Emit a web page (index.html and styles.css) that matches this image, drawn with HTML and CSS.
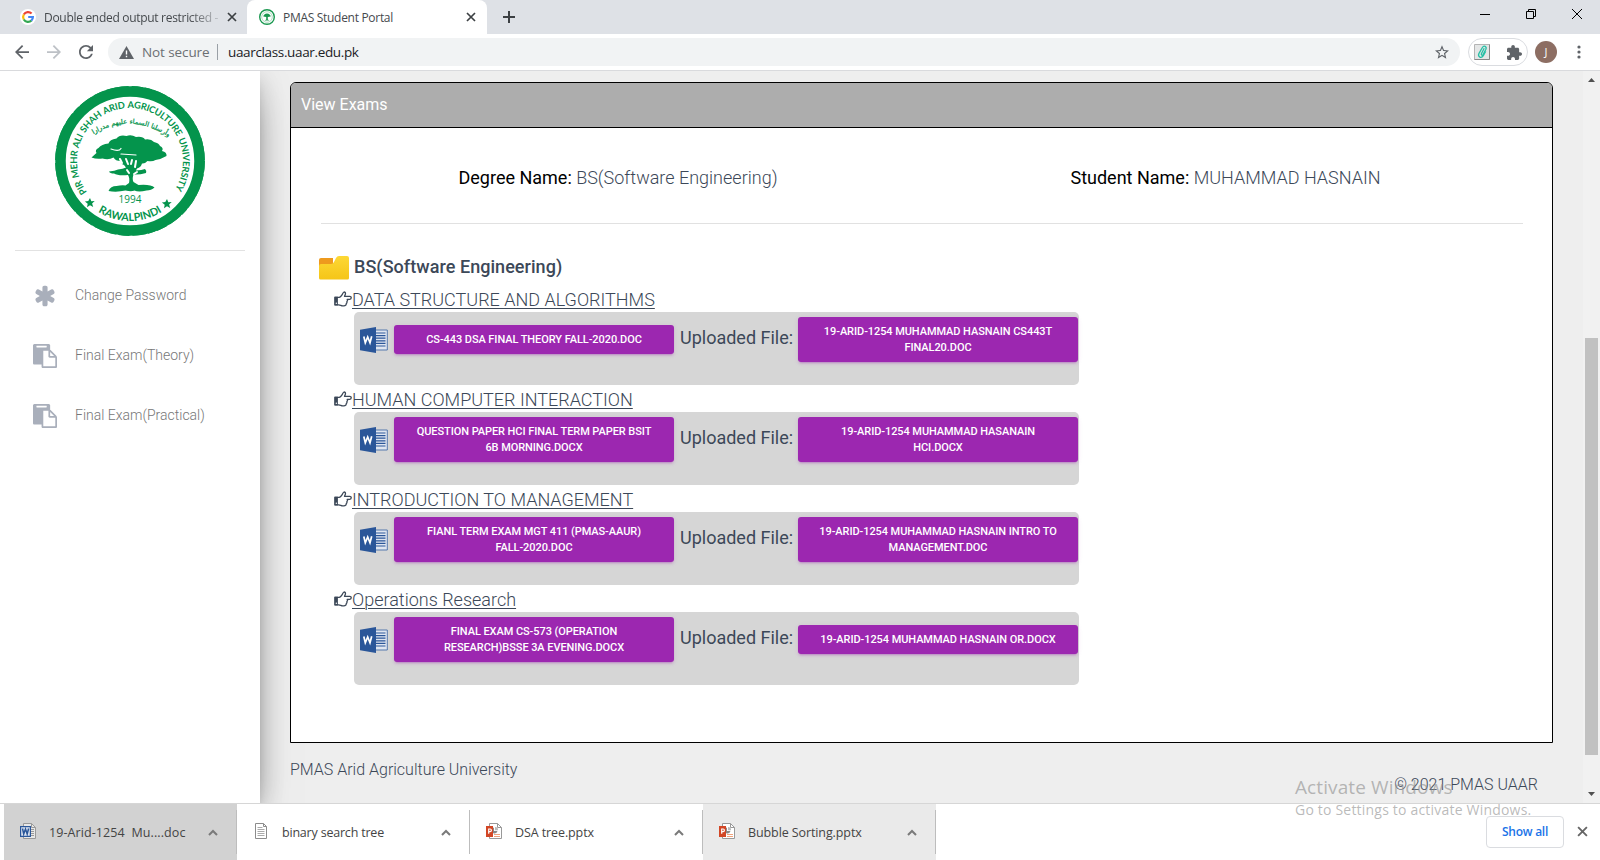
FILE: index.html
```html
<!DOCTYPE html>
<html lang="en">
<head>
<meta charset="utf-8">
<title>PMAS Student Portal</title>
<link rel="stylesheet" href="styles.css">
</head>
<body>
<svg class="defs" width="0" height="0">
  <symbol id="x" viewBox="0 0 10 10"><path d="M1 1l8 8M9 1l-8 8" fill="none" stroke="currentColor" stroke-width="1.7"/></symbol>
  <symbol id="paste" viewBox="0 0 1792 1792"><path d="M768 1664h896v-640h-416q-40 0-68-28t-28-68v-416h-384v1152zm256-1440v-64q0-13-9.500-22.500t-22.500-9.500h-704q-13 0-22.500 9.500t-9.500 22.500v64q0 13 9.500 22.500t22.500 9.500h704q13 0 22.500-9.500t9.500-22.500zm256 672h299l-299-299v299zm512 128v672q0 40-28 68t-68 28h-960q-40 0-68-28t-28-68v-160h-544q-40 0-68-28t-28-68v-1344q0-40 28-68t68-28h1088q40 0 68 28t28 68v328q21 13 36 28l408 408q28 28 48 76t20 88z" fill="currentColor"/></symbol>
  <symbol id="hand" viewBox="0 0 18 16">
    <path d="M1 6.300h4.300c1.300-.3 2-1.400 2.800-2.600C8.700 2.800 9 1.300 10 1c1.300 0 1.700 1 1.400 2.200-.2.900-.8 1.500-.9 2.200h5.300a1.400 1.400 0 0 1 0 2.900h-2.600c.6.900.4 1.700-.3 2.300.3.900 0 1.600-.7 2.100.1 1.500-.9 2.100-2.300 2.100H8.600c-1.300 0-2.300-.9-3.800-1H1z" fill="none" stroke="currentColor" stroke-width="1.300" stroke-linejoin="round"/>
    <path d="M.4 5.700h3.500v8.700H.4z" fill="currentColor"/><circle cx="2.300" cy="12.300" r=".7" fill="#fff"/>
  </symbol>
  <symbol id="word" viewBox="0 0 28 26">
    <path d="M15 3h12.300v20H15z" fill="#e0e6f0" stroke="#5578ad" stroke-width="1"/>
    <path d="M16 6h9.500M16 8.600h9.500M16 11.200h9.500M16 13.800h9.500M16 16.400h9.500M16 19h9.500" stroke="#2a5699" stroke-width="1.200"/>
    <path d="M0 2.800L16 0v26L0 23.200z" fill="#2a5699"/>
    <path d="M3.800 9.500l1.500 6.300L7.700 10l2.300 5.800L11.700 9.300" fill="none" stroke="#fff" stroke-width="1.700"/>
  </symbol>
  <symbol id="chev" viewBox="0 0 10 7"><path d="M1 6l4-4 4 4" fill="none" stroke="#7a7a7a" stroke-width="2"/></symbol>
  <symbol id="ppt" viewBox="0 0 16 16">
    <path d="M3.500.5h8l4 4v11h-12z" fill="#fff" stroke="#999"/><path d="M11.500.5v4h4" fill="none" stroke="#999"/>
    <path d="M8 4.500a3 3 0 1 0 3.500 3.500H8z" fill="#888"/><path d="M9 4v3.200h3A3 3 0 0 0 9 4z" fill="#bbb"/>
    <path d="M8 11.500h6M8 13.500h6" stroke="#f0a27c"/><path d="M0 3h7v11H0z" fill="#d24625"/>
    <path d="M2.700 10.800V6h1.400a1.200 1.200 0 0 1 0 2.600H2.700" fill="none" stroke="#fff" stroke-width="1.200"/>
  </symbol>
</svg>

<div class="tabstrip">
  <div class="tab tab-idle">
    <svg class="fav" viewBox="0 0 16 16"><circle cx="8" cy="8" r="8" fill="#fff"/><g fill="none" stroke-width="2.200"><path d="M3.800 5.500A4.900 4.900 0 0 1 11.600 4.600" stroke="#ea4335"/><path d="M3.800 5.500a5 5 0 0 0 0 5" stroke="#fbbc05"/><path d="M3.800 10.500a4.900 4.900 0 0 0 7.700 1" stroke="#34a853"/><path d="M8.200 8h4.700a4.900 4.900 0 0 1-1.600 3.600" stroke="#4285f4"/></g></svg>
    <span class="tab-title t1">Double ended output restricted -</span>
    <svg class="tab-x"><use href="#x"/></svg>
  </div>
  <div class="tab tab-active">
    <svg class="fav" viewBox="0 0 16 16"><circle cx="8" cy="8" r="7.300" fill="#fff" stroke="#1a9850" stroke-width="1.400"/><circle cx="8" cy="8" r="5.300" fill="none" stroke="#9fd3b4" stroke-width=".8"/><path d="M4.300 7.500q.5-2.700 3.700-3 3.300.3 3.700 3L8.800 8v2.600l1.700.8h-5l1.700-.8V8z" fill="#1a9850"/></svg>
    <span class="tab-title t2">PMAS Student Portal</span>
    <svg class="tab-x"><use href="#x"/></svg>
  </div>
  <svg class="newtab" viewBox="0 0 12 12"><path d="M6 0v12M0 6h12" stroke="#3c4043" stroke-width="2"/></svg>
  <svg class="winbtns" viewBox="0 0 104 12" fill="none" stroke="#000"><path d="M0 6.500h10"/><path d="M46.500 3.500h7v7h-7zM48.500 3.500v-2h7v7h-2"/><path d="M92 1l10 10M102 1L92 11"/></svg>
</div>

<div class="toolbar">
  <svg class="nav" viewBox="4 4 16 16"><path d="M20 11H7.830l5.590-5.590L12 4l-8 8 8 8 1.410-1.410L7.830 13H20v-2z" fill="#5f6368"/></svg>
  <svg class="nav" viewBox="4 4 16 16"><path d="M12 4l-1.410 1.410L16.170 11H4v2h12.170l-5.580 5.590L12 20l8-8z" fill="#bdc1c6"/></svg>
  <svg class="nav" viewBox="4 4 16 16"><path d="M17.650 6.350C16.200 4.900 14.210 4 12 4c-4.420 0-7.990 3.580-7.990 8s3.570 8 7.990 8c3.730 0 6.840-2.550 7.730-6h-2.080c-.82 2.330-3.040 4-5.650 4-3.310 0-6-2.690-6-6s2.690-6 6-6c1.660 0 3.140.69 4.220 1.780L13 11h7V4l-2.350 2.350z" fill="#5f6368"/></svg>
  <div class="omnibox">
    <svg class="warn" viewBox="0 0 15 13"><path d="M7.500 0L15 13H0z" fill="#5f6368"/><path d="M7.500 4.500v4M7.500 9.700v1.500" stroke="#fff" stroke-width="1.400"/></svg>
    <span class="insecure">Not secure</span><span class="sep"></span><span class="url">uaarclass.uaar.edu.pk</span>
    <svg class="star" viewBox="2 2 20 19"><path d="M22 9.240l-7.190-.62L12 2 9.190 8.630 2 9.240l5.460 4.730L5.820 21 12 17.270 18.180 21l-1.630-7.030L22 9.240zM12 15.400l-3.760 2.270 1-4.280-3.320-2.880 4.380-.38L12 6.100l1.710 4.040 4.380.38-3.320 2.880 1 4.280L12 15.400z" fill="#5f6368"/></svg>
  </div>
  <div class="extpill">
    <svg width="16" height="16" viewBox="0 0 16 16"><path d="M.5.500h15v15H.5z" fill="#e4e6e6" stroke="#b4b4b4"/><path d="M15.500.5v15H.5" fill="none" stroke="#888"/><path d="M10.200 4.200L7.400 9.800c-.5 1.400 1 2 1.700.8l2.800-5.400c1.100-2.600-2-4.200-3.500-1.700L5 9.300c-1.700 3.700 2.400 5.600 4.300 2.300l2.500-4.500" fill="none" stroke="#26bfa5" stroke-width="1.300"/></svg>
    <svg width="15" height="15" viewBox="2 1 21 21"><path d="M20.500 11H19V7c0-1.100-.9-2-2-2h-4V3.500C13 2.120 11.880 1 10.500 1S8 2.120 8 3.500V5H4c-1.100 0-1.990.9-1.990 2v3.800H3.500c1.490 0 2.700 1.210 2.700 2.700s-1.210 2.700-2.700 2.700H2V20c0 1.100.9 2 2 2h3.800v-1.500c0-1.490 1.210-2.700 2.700-2.700 1.490 0 2.700 1.210 2.700 2.700V22H17c1.100 0 2-.9 2-2v-4h1.500c1.380 0 2.500-1.120 2.500-2.500S21.880 11 20.500 11z" fill="#5f6368"/></svg>
  </div>
  <div class="avatar">J</div>
  <svg class="dots" viewBox="0 0 4 14" fill="#5f6368"><circle cx="2" cy="2" r="1.600"/><circle cx="2" cy="7" r="1.600"/><circle cx="2" cy="12" r="1.600"/></svg>
</div>

<div class="page">
  <aside class="sidebar">
    <div class="brand">
      <svg width="152" height="152" viewBox="-76 -76 152 152">
        <defs>
          <path id="arcTop" d="M-42.900 31.200A53 53 0 1 1 42.900 31.200"/>
          <path id="arcBottom" d="M-38 46.500A60 60 0 0 0 38 46.500"/>
          <path id="arcVerse" d="M-41 -24Q0 -52 43 -21"/>
        </defs>
        <circle r="69.500" fill="none" stroke="#04944c" stroke-width="10.500"/>
        <circle r="73.300" fill="none" stroke="#04944c" stroke-width="3.200" stroke-dasharray="11 2 7 1.500 14 3"/>
        <text class="seal-top"><textPath href="#arcTop" textLength="229" lengthAdjust="spacing">PIR MEHR ALI SHAH ARID AGRICULTURE UNIVERSITY</textPath></text>
        <text class="seal-bottom"><textPath href="#arcBottom" startOffset="50%" text-anchor="middle">RAWALPINDI</textPath></text>
        <text class="seal-verse" direction="rtl"><textPath href="#arcVerse" startOffset="50%" text-anchor="middle">وأرسلنا السماء عليهم مدرارا</textPath></text>
        <g fill="#04944c">
          <path d="M-38.500-3.500q3-3 5-4.500-2-3 2-5 3-4 10-4.500 1-4 8-5 3-4 10-2.500Q1-27 6-24q7-1 9 2.500 6-1 9 2.500 5 1 6 4 4 2 2 5 5 1 4.500 5-5 3-11 4-3 2-8 1-3 3-5.500 2.500-1 4-5 5L6 9.500q6-.5 9-1.500 2 2 1 4-7 2-12.500 1.500Q2 18 3.500 21l5 3q12-1 16 2.500-3 3-8 3-8 2-12 0-3 1.500-9 0-9 2-17 .5 2-5 8-5 5-1 9-.5L-1 22q1-5-1-8-10 1-14-1.500-4 0-5-2 6-.5 9-2 5-.5 8-2L-6 4q-3-1-3.500-4-5 0-7-3.500-5 3-11 1-6 1-11-1z"/>
        </g>
        <g fill="none" stroke="#fff" stroke-linecap="round"><path d="M-19-12q8 3 10-.5M-9-7l15 1" stroke-width="1.200"/><path d="M-10-2l2 4M-4-2l2 5M2-1l-1 4M6 0l-1 6M-3 9l2 3M4 13l3-2" stroke-width="2"/></g>
        <text class="seal-year" y="42" text-anchor="middle">1994</text>
        <g fill="#04944c"><path d="M-40 37l1.300 3.200 3.400-.1-2.600 2.400 1.100 3.400-3.200-1.700-3 2 .7-3.500-2.800-2.200 3.400-.4z"/><path d="M37 38l1.300 3.200 3.400-.1-2.600 2.400 1.100 3.400-3.200-1.700-3 2 .7-3.500-2.800-2.200 3.400-.4z"/></g>
      </svg>
    </div>
    <nav class="menu">
      <div class="menu-item"><svg class="menu-icon" viewBox="0 0 1792 1792"><path d="M1546 1050q46 26 59.500 77.500t-12.500 97.500l-64 110q-26 46-77.500 59.500t-97.500-12.500l-266-153v307q0 52-38 90t-90 38h-128q-52 0-90-38t-38-90v-307l-266 153q-46 26-97.500 12.500t-77.500-59.500l-64-110q-26-46-12.500-97.500t59.500-77.500l266-154-266-154q-46-26-59.500-77.500t12.500-97.500l64-110q26-46 77.500-59.500t97.500 12.500l266 153v-307q0-52 38-90t90-38h128q52 0 90 38t38 90v307l266-153q46-26 97.500-12.500t77.500 59.500l64 110q26 46 12.500 97.500t-59.500 77.500l-266 154z" fill="currentColor"/></svg><span>Change Password</span></div>
      <div class="menu-item"><svg class="menu-icon"><use href="#paste"/></svg><span>Final Exam(Theory)</span></div>
      <div class="menu-item"><svg class="menu-icon"><use href="#paste"/></svg><span>Final Exam(Practical)</span></div>
    </nav>
  </aside>

  <main class="main">
    <section class="card">
      <header class="card-head">View Exams</header>
      <div class="card-body">
        <div class="info">
          <div><b>Degree Name:</b> BS(Software Engineering)</div>
          <div><b>Student Name:</b> MUHAMMAD HASNAIN</div>
        </div>
        <div class="degree">
          <svg width="30" height="24" viewBox="0 0 30 24"><defs><linearGradient id="fg" x2="0" y2="1"><stop stop-color="#fdd835"/><stop offset="1" stop-color="#f5c518"/></linearGradient></defs><path d="M0 4q0-2 2-2h12v9H0z" fill="#ee9a1e"/><path d="M0 10q0-2 2-2h10q2 0 3-2l2-4q1-2 3-2h8q2 0 2 2v20q0 1.500-1.500 1.500h-27Q0 23.500 0 22z" fill="url(#fg)"/></svg>
          <span>BS(Software Engineering)</span>
        </div>
        <div class="course">
          <div class="course-name"><svg class="hand"><use href="#hand"/></svg><u>DATA STRUCTURE AND ALGORITHMS</u></div>
          <div class="files"><svg class="word"><use href="#word"/></svg><button class="file">CS-443 DSA FINAL THEORY FALL-2020.DOC</button><span class="up">Uploaded File:</span><button class="file">19-ARID-1254 MUHAMMAD HASNAIN CS443T<br>FINAL20.DOC</button></div>
        </div>
        <div class="course">
          <div class="course-name"><svg class="hand"><use href="#hand"/></svg><u>HUMAN COMPUTER INTERACTION</u></div>
          <div class="files"><svg class="word"><use href="#word"/></svg><button class="file">QUESTION PAPER HCI FINAL TERM PAPER BSIT<br>6B MORNING.DOCX</button><span class="up">Uploaded File:</span><button class="file">19-ARID-1254 MUHAMMAD HASANAIN<br>HCI.DOCX</button></div>
        </div>
        <div class="course">
          <div class="course-name"><svg class="hand"><use href="#hand"/></svg><u>INTRODUCTION TO MANAGEMENT</u></div>
          <div class="files"><svg class="word"><use href="#word"/></svg><button class="file">FIANL TERM EXAM MGT 411 (PMAS-AAUR)<br>FALL-2020.DOC</button><span class="up">Uploaded File:</span><button class="file">19-ARID-1254 MUHAMMAD HASNAIN INTRO TO<br>MANAGEMENT.DOC</button></div>
        </div>
        <div class="course">
          <div class="course-name"><svg class="hand"><use href="#hand"/></svg><u>Operations Research</u></div>
          <div class="files"><svg class="word"><use href="#word"/></svg><button class="file">FINAL EXAM CS-573 (OPERATION<br>RESEARCH)BSSE 3A EVENING.DOCX</button><span class="up">Uploaded File:</span><button class="file">19-ARID-1254 MUHAMMAD HASNAIN OR.DOCX</button></div>
        </div>
      </div>
    </section>
    <footer class="footer"><span>PMAS Arid Agriculture University</span><span class="copy">© 2021 PMAS UAAR</span></footer>
  </main>

  <div class="scrollbar">
    <svg width="7" height="4" viewBox="0 0 7 4"><path d="M0 4L3.500 0 7 4z" fill="#505050"/></svg>
    <div class="thumb"></div>
    <svg width="7" height="4" viewBox="0 0 7 4"><path d="M0 0h7L3.500 4z" fill="#505050"/></svg>
  </div>
</div>

<div class="downloads">
  <div class="dl dl-pressed"><svg class="dl-icon" viewBox="0 0 16 16"><path d="M3.500.5h8l4 4v11h-12z" fill="#e8e8e8" stroke="#999"/><path d="M11.500.5v4h4" fill="none" stroke="#999"/><path d="M10 6.500h4M10 8.500h4M10 10.500h4M10 12.500h4" stroke="#999"/><path d="M.6 3.600h9.800v9.800H.6z" fill="#dfe6f2" stroke="#2b579a" stroke-width="1.200"/><path d="M2.500 5.500l1.200 5.500L5.500 6l1.700 5 1.400-5.500" fill="none" stroke="#2b579a" stroke-width="1.500"/></svg><span class="d1">19-Arid-1254&nbsp; Mu....doc</span><svg class="chev"><use href="#chev"/></svg></div>
  <div class="dl"><svg class="dl-icon" viewBox="0 0 16 16"><path d="M2.500.5h8l3 3v12h-11z" fill="#fff" stroke="#8c8c8c"/><path d="M10.500.5v3h3" fill="none" stroke="#8c8c8c"/><path d="M4.500 4.500h5M4.500 6.500h7M4.500 8.500h7M4.500 10.500h7M4.500 12.500h7" stroke="#aaa"/></svg><span class="d2">binary search tree</span><svg class="chev"><use href="#chev"/></svg></div>
  <div class="dl"><svg class="dl-icon"><use href="#ppt"/></svg><span class="d3">DSA tree.pptx</span><svg class="chev"><use href="#chev"/></svg></div>
  <div class="dl dl-hover"><svg class="dl-icon"><use href="#ppt"/></svg><span class="d4">Bubble Sorting.pptx</span><svg class="chev"><use href="#chev"/></svg></div>
  <div class="showall">Show all</div>
  <svg class="dl-close"><use href="#x"/></svg>
</div>

<div class="watermark"><div class="wm-title">Activate Windows</div><div class="wm-sub">Go to Settings to activate Windows.</div></div>
</body>
</html>
```
FILE: styles.css
```css
* { box-sizing: border-box; }
body { margin: 0; width: 1600px; height: 860px; overflow: hidden; position: relative; display: flex; flex-direction: column; background: #fff; font-family: Roboto, "Liberation Sans", sans-serif; font-weight: 300; color: #3c4858; }
svg { display: block; flex: none; overflow: visible; }
.defs { position: absolute; }

.tabstrip, .toolbar, .downloads { font-family: "Open Sans", "Noto Sans", sans-serif; font-weight: 400; }
.tabstrip { height: 34px; flex: none; background: #dee1e6; display: flex; align-items: center; }
.tab { height: 34px; display: flex; align-items: center; font-size: 12px; color: #45494d; }
.tab-idle { width: 247px; padding-left: 20px; }
.tab-active { width: 240px; padding-left: 12px; background: #fff; border-radius: 8px 8px 0 0; }
.fav { width: 16px; height: 16px; margin-right: 8px; }
.tab-title { white-space: nowrap; overflow: hidden; letter-spacing: -.3px; }
.t1 { width: 174px; mask-image: linear-gradient(90deg, #000 145px, transparent 182px); }
.t2 { width: 174px; }
.tab-x { width: 10px; height: 10px; color: #3c4043; margin-left: 9px; }
.newtab { width: 12px; height: 12px; margin-left: 16px; }
.winbtns { width: 104px; height: 12px; margin-left: auto; margin-right: 16px; margin-bottom: 6px; }

.toolbar { height: 37px; flex: none; background: #fff; border-bottom: 1px solid #d9dadd; display: flex; align-items: center; padding-left: 15px; }
.nav { width: 14px; height: 14px; margin-right: 18px; }
.omnibox { width: 1352px; height: 28px; border-radius: 14px; background: #f1f3f4; margin-left: -3px; padding: 0 11px; display: flex; align-items: center; font-size: 14px; }
.warn { width: 15px; height: 13px; }
.insecure { margin-left: 8px; width: 68px; white-space: nowrap; font-size: 13.500px; color: #6b6f73; letter-spacing: -.1px; }
.sep { width: 1px; height: 16px; margin: 0 10px 0 7px; background: #9aa0a6; }
.url { font-size: 13.500px; color: #202124; letter-spacing: -.35px; }
.star { width: 14px; height: 14px; margin-left: auto; }
.extpill { width: 60px; height: 28px; margin-left: 8px; border: 1px solid #dadce0; border-radius: 14px; display: flex; align-items: center; justify-content: space-between; padding: 0 5px; }
.avatar { width: 22px; height: 22px; border-radius: 50%; margin-left: 7px; background: #8d6e63; color: #fff; font-size: 11px; line-height: 22px; text-align: center; }
.dots { width: 4px; height: 14px; margin-left: 19.500px; }

.page { height: 732px; flex: none; display: flex; overflow: hidden; background: #eee; }
.sidebar { width: 260px; height: 732px; position: relative; z-index: 1; background: #fff; box-shadow: 0 16px 38px -12px rgba(0,0,0,.56), 0 4px 25px 0 rgba(0,0,0,.12), 0 8px 10px -5px rgba(0,0,0,.2); }
.brand { height: 180px; margin: 0 15px; padding: 14px 0 0 39px; border-bottom: 1px solid #e2e2e2; }
.seal-top, .seal-bottom { font-family: Lato, sans-serif; font-weight: 700; fill: #04944c; }
.seal-top { font-size: 9.300px; word-spacing: 1px; }
.seal-bottom { font-size: 10.800px; }
.seal-verse { font-family: "DejaVu Sans", sans-serif; font-size: 6.800px; font-weight: 400; fill: #04944c; stroke: #04944c; stroke-width: .25px; }
.seal-year { font-family: "Open Sans", sans-serif; font-size: 10px; font-weight: 400; fill: #04944c; }
.menu { padding: 15px 0 0 33px; }
.menu-item { height: 60px; display: flex; align-items: center; font-size: 14px; color: #777; }
.menu-icon { width: 24px; height: 24px; margin-right: 18px; color: #a9afbb; }
.menu-item span { margin-top: -2px; }

.main { width: 1323px; flex: none; padding: 11px 30px 0; }
.card { position: relative; z-index: 2; height: 661px; background: #fff; border: 1px solid #000; border-radius: 6px 6px 0 0; }
.card-head { height: 45px; background: #adadad; border-bottom: 1px solid #000; border-radius: 5px 5px 0 0; padding-left: 10px; font-size: 16px; line-height: 43px; font-weight: 400; color: #fff; }
.card-body { padding: 0 28px; }
.info { height: 96px; margin: 0 1px 0 2px; display: grid; grid-template-columns: 593px 594px; column-gap: 14px; justify-content: center; border-bottom: 1px solid #e1e1e1; font-size: 18px; line-height: 100px; text-align: center; white-space: nowrap; }
.info b { font-weight: 400; color: #000; }
.degree { display: flex; align-items: center; gap: 5px; height: 24px; margin-top: 32px; font-size: 18px; font-weight: 500; }
.degree span { margin-top: -3px; letter-spacing: .05px; }
.course { height: 100px; padding: 8px 0 0 15px; }
.degree + .course { margin-top: -1px; }
.course-name { display: flex; align-items: center; height: 24px; margin-bottom: 1px; font-size: 18px; }
.course-name u { text-underline-offset: 2px; text-decoration-thickness: 1px; white-space: nowrap; }
.hand { width: 18px; height: 16px; }
.files { width: 725px; height: 73px; margin: 0 0 0 20px; padding: 0 0 18px 6px; border-radius: 5px; background: #d6d6d6; display: flex; align-items: center; }
.word { width: 28px; height: 26px; margin-right: 6px; }
.file { flex: none; width: 280px; min-height: 29px; padding: 7px 0 6px; border: 0; border-radius: 3px; background: #9c27b0; color: #fff; font: 500 11px/16px Roboto, sans-serif; letter-spacing: -.07px; text-align: center; white-space: nowrap; box-shadow: 0 2px 2px rgba(156,39,176,.14), 0 3px 1px -2px rgba(156,39,176,.2), 0 1px 5px rgba(156,39,176,.12); }
.up { width: 124px; padding-left: 6px; margin-top: -4px; font-size: 18px; font-weight: 400; white-space: nowrap; }
.footer { display: flex; justify-content: space-between; padding: 17px 15px 0 0; font-size: 16px; line-height: 20px; }
.copy { margin-top: 15px; }

.scrollbar { width: 17px; height: 732px; background: #f1f1f1; display: flex; flex-direction: column; align-items: center; padding: 7px 0 7px; }
.thumb { width: 13px; height: 417px; margin: 256px 0 auto; background: #c1c1c1; }

.downloads { height: 57px; flex: none; border-top: 1px solid #d6d6d6; display: flex; align-items: center; padding-left: 4px; background: #fff; font-size: 12.500px; color: #444; }
.dl { width: 233px; height: 56px; padding-left: 16px; display: flex; align-items: center; background: linear-gradient(#bdbdbd, #bdbdbd) right 6px / 1px 44px no-repeat; }
.dl-pressed { background-color: #d2d2d2; }
.dl-hover { background-color: #eaeaea; }
.dl-icon { width: 16px; height: 16px; margin-right: 13px; margin-bottom: 2px; }
.dl span { width: 159px; white-space: nowrap; letter-spacing: -.2px; }
.dl .d1 { letter-spacing: .09px; }
.dl .d3, .dl .d4 { letter-spacing: -.1px; }
.chev { width: 10px; height: 7px; }
.showall { width: 78px; height: 32px; margin-left: auto; border: 1px solid #dadce0; border-radius: 4px; text-align: center; line-height: 29px; color: #1a73e8; font-size: 12px; font-weight: 600; letter-spacing: -.25px; }
.dl-close { width: 11px; height: 11px; margin: 0 12px 2px 13px; color: #666; }

.watermark { position: absolute; left: 1295px; top: 774px; z-index: 5; font-family: "Open Sans", sans-serif; font-weight: 400; color: rgba(140,140,140,.6); white-space: nowrap; }
.wm-title { font-size: 19px; line-height: 26px; letter-spacing: .1px; }
.wm-sub { font-size: 14px; line-height: 20px; letter-spacing: .2px; }
```
